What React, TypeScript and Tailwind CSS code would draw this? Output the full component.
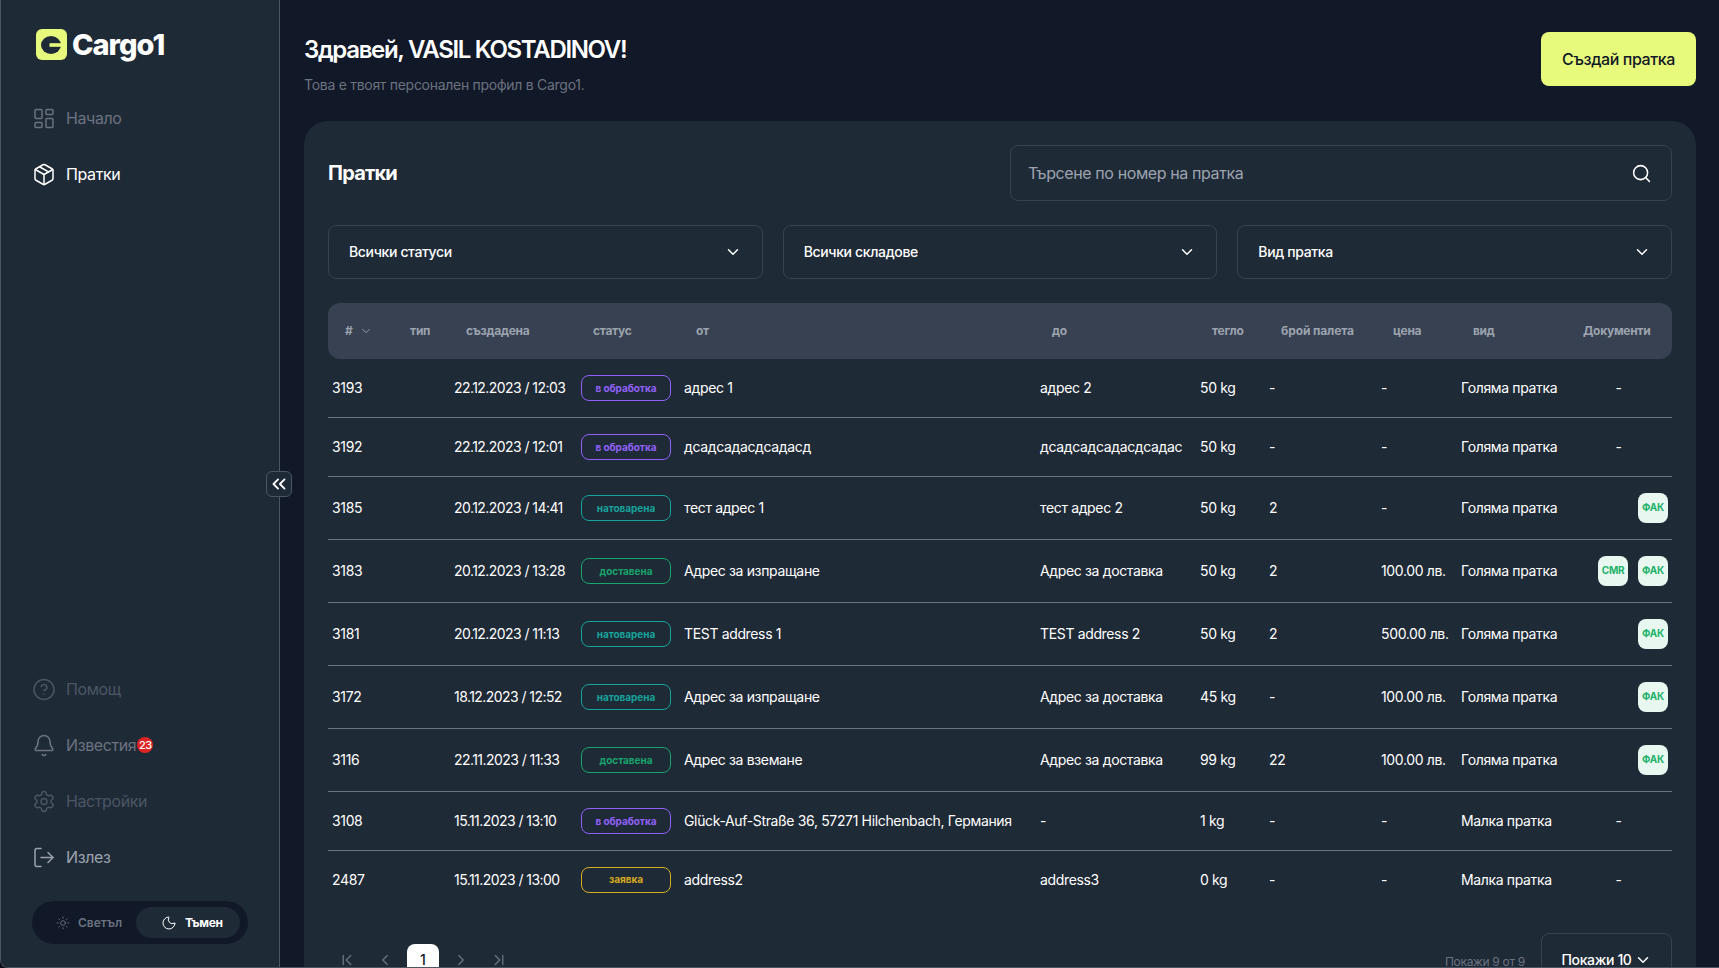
import { LayoutDashboard, Package, CircleHelp, Bell, Settings, LogOut, Sun, Moon, Search, ChevronDown, ChevronsLeft, ChevronLeft, ChevronRight, ChevronFirst, ChevronLast } from "lucide-react";

type Row = { id: string; date: string; status: "p" | "l" | "d" | "r"; from: string; to: string; w: string; pal: string; price: string; kind: string; docs: string[]; h: string };

const rows: Row[] = [
  { id: "3193", date: "22.12.2023 / 12:03", status: "p", from: "адрес 1", to: "адрес 2", w: "50 kg", pal: "-", price: "-", kind: "Голяма пратка", docs: [], h: "h-[59px]" },
  { id: "3192", date: "22.12.2023 / 12:01", status: "p", from: "дсадсадасдсадасд", to: "дсадсадсадасдсадас", w: "50 kg", pal: "-", price: "-", kind: "Голяма пратка", docs: [], h: "h-[59px]" },
  { id: "3185", date: "20.12.2023 / 14:41", status: "l", from: "тест адрес 1", to: "тест адрес 2", w: "50 kg", pal: "2", price: "-", kind: "Голяма пратка", docs: ["ФАК"], h: "h-[63px]" },
  { id: "3183", date: "20.12.2023 / 13:28", status: "d", from: "Адрес за изпращане", to: "Адрес за доставка", w: "50 kg", pal: "2", price: "100.00 лв.", kind: "Голяма пратка", docs: ["CMR", "ФАК"], h: "h-[63px]" },
  { id: "3181", date: "20.12.2023 / 11:13", status: "l", from: "TEST address 1", to: "TEST address 2", w: "50 kg", pal: "2", price: "500.00 лв.", kind: "Голяма пратка", docs: ["ФАК"], h: "h-[63px]" },
  { id: "3172", date: "18.12.2023 / 12:52", status: "l", from: "Адрес за изпращане", to: "Адрес за доставка", w: "45 kg", pal: "-", price: "100.00 лв.", kind: "Голяма пратка", docs: ["ФАК"], h: "h-[63px]" },
  { id: "3116", date: "22.11.2023 / 11:33", status: "d", from: "Адрес за вземане", to: "Адрес за доставка", w: "99 kg", pal: "22", price: "100.00 лв.", kind: "Голяма пратка", docs: ["ФАК"], h: "h-[63px]" },
  { id: "3108", date: "15.11.2023 / 13:10", status: "p", from: "Glück-Auf-Straße 36, 57271 Hilchenbach, Германия", to: "-", w: "1 kg", pal: "-", price: "-", kind: "Малка пратка", docs: [], h: "h-[59px]" },
  { id: "2487", date: "15.11.2023 / 13:00", status: "r", from: "address2", to: "address3", w: "0 kg", pal: "-", price: "-", kind: "Малка пратка", docs: [], h: "h-[59px]" },
];

function Badge({ s }: { s: Row["status"] }) {
  if (s === "p") return <span className="flex h-[26px] w-[90px] items-center justify-center rounded-lg border border-[#9061f9] text-[10px] font-bold tracking-[-0.005em] text-[#9061f9]">в обработка</span>;
  if (s === "l") return <span className="flex h-[26px] w-[90px] items-center justify-center rounded-lg border border-[#16a39a] text-[10px] font-bold tracking-[-0.005em] text-[#16a39a]">натоварена</span>;
  if (s === "d") return <span className="flex h-[26px] w-[90px] items-center justify-center rounded-lg border border-[#17a56b] text-[10px] font-bold tracking-[-0.005em] text-[#17a56b]">доставена</span>;
  return <span className="flex h-[26px] w-[90px] items-center justify-center rounded-lg border border-[#d8ab1f] text-[10px] font-bold tracking-[-0.005em] text-[#d8ab1f]">заявка</span>;
}

function Nav({ icon, label, cls, badge }: { icon: React.ReactNode; label: string; cls: string; badge?: string }) {
  return (
    <div className={`flex h-14 items-center gap-[10px] pl-[31px] text-base ${cls}`}>
      <span className="flex w-6 justify-center">{icon}</span>
      <span className="tracking-tight">{label}</span>
      {badge && <span className="-ml-[9px] flex size-4 items-center justify-center rounded-full bg-[#dc2626] text-[11px] font-medium tracking-tighter text-white">{badge}</span>}
    </div>
  );
}

function Select({ label }: { label: string }) {
  return (
    <div className="flex h-[54px] flex-1 items-center justify-between rounded-lg border border-[#374151] pl-5 pr-[20px]">
      <span className="text-sm font-medium tracking-tight text-white">{label}</span>
      <ChevronDown size={18} strokeWidth={2} className="text-white" />
    </div>
  );
}

const td = "border-b border-[#6b7280] pl-1 align-middle text-sm tracking-tight text-white whitespace-nowrap";
const tdLast = "pl-1 pb-[2px] align-middle text-sm tracking-tight text-white whitespace-nowrap";
const dateTd = "border-b border-[#6b7280] pl-1 align-middle text-sm tracking-[-0.04em] text-white whitespace-nowrap";
const dateTdLast = "pl-1 pb-[2px] align-middle text-sm tracking-[-0.04em] text-white whitespace-nowrap";
const th = "pl-4 text-left text-xs font-bold tracking-tight text-[#9ca3af] whitespace-nowrap";
const thWide = "pl-4 text-left text-xs font-bold tracking-[-0.01em] text-[#9ca3af] whitespace-nowrap";

export default function App() {
  return (
    <div className="h-[968px] bg-[#0b0f17]">
      <div className="relative flex h-[968px] overflow-hidden rounded-bl-lg border-b border-l border-[#4b5563] bg-[#111827] font-['Inter',sans-serif]">
        <aside className="relative flex w-[279px] shrink-0 flex-col border-r border-[#4b5563] bg-[#1f2a37] pb-[23px]">
          <div className="flex items-center gap-[5px] pl-[35px] pt-[29px]">
            <span className="flex size-[31px] items-center justify-center rounded-md bg-[#e8fa7c]">
              <svg width="21" height="18" viewBox="0 0 21 18">
                <ellipse cx="10" cy="9" rx="10" ry="9" fill="#1f2a37" />
                <rect x="8.5" y="7.2" width="12.5" height="3.6" fill="#e8fa7c" />
              </svg>
            </span>
            <span className="text-[29px] font-extrabold leading-none tracking-[-0.035em] text-white">Cargo1</span>
          </div>
          <div className="mt-[30px]">
            <Nav icon={<LayoutDashboard size={25} strokeWidth={1.5} />} label="Начало" cls="text-[#6b7280]" />
            <Nav icon={<Package size={25} strokeWidth={1.5} />} label="Пратки" cls="text-white" />
          </div>
          <div className="mt-auto">
            <Nav icon={<CircleHelp size={25} strokeWidth={1.5} />} label="Помощ" cls="text-[#4b5563]" />
            <Nav icon={<Bell size={25} strokeWidth={1.5} />} label="Известия" cls="text-[#6b7280]" badge="23" />
            <Nav icon={<Settings size={25} strokeWidth={1.5} />} label="Настройки" cls="text-[#4b5563]" />
            <Nav icon={<LogOut size={25} strokeWidth={1.5} />} label="Излез" cls="text-[#9ca3af]" />
            <div className="ml-[31px] mt-4 flex h-[43px] w-[216px] items-center rounded-full bg-[#111827] pl-[24px] pr-2 text-xs">
              <Sun size={14} strokeWidth={1.5} className="text-[#6b7280]" />
              <span className="ml-[8px] font-semibold text-[#6b7280]">Светъл</span>
              <div className="ml-auto flex h-[31px] w-[104px] items-center gap-[8px] rounded-full bg-[#1f2a37] pl-[25px]">
                <Moon size={16} strokeWidth={1.5} className="text-white" />
                <span className="font-bold tracking-tight text-white">Тъмен</span>
              </div>
            </div>
          </div>
          <button className="absolute right-[-13px] top-[471px] flex size-[26px] items-center justify-center rounded-md border border-[#4b5563] bg-[#1f2a37] text-white">
            <ChevronsLeft size={22} strokeWidth={2} />
          </button>
        </aside>

        <main className="min-w-0 flex-1 pl-6 pr-[23px]">
          <header className="flex items-start justify-between pt-8">
            <div>
              <h1 className="mt-1 text-2xl/7 font-semibold tracking-[-0.055em] text-white">Здравей, VASIL KOSTADINOV!</h1>
              <p className="mt-[11px] text-sm tracking-[-0.02em] text-[#6b7280]">Това е твоят персонален профил в Cargo1.</p>
            </div>
            <button className="h-[54px] w-[155px] rounded-lg bg-[#e8fa7c] text-base font-medium tracking-tight text-[#111827]">Създай пратка</button>
          </header>

          <section className="mt-[26px] rounded-t-3xl bg-[#1f2a37] px-6 pt-6">
            <div className="flex items-center justify-between">
              <h2 className="text-xl font-bold tracking-[-0.04em] text-white">Пратки</h2>
              <div className="flex h-[56px] w-[662px] items-center justify-between rounded-lg border border-[#374151] pl-[17px] pr-[19px]">
                <span className="text-base tracking-tight text-[#9ca3af]">Търсене по номер на пратка</span>
                <Search size={21} strokeWidth={1.75} className="text-white" />
              </div>
            </div>

            <div className="mt-6 flex gap-[20px]">
              <Select label="Всички статуси" />
              <Select label="Всички складове" />
              <Select label="Вид пратка" />
            </div>

            <table className="mt-6 w-[1344px] table-fixed border-separate border-spacing-0">
              <colgroup>
                <col className="w-[66px]" />
                <col className="w-[56px]" />
                <col className="w-[127px]" />
                <col className="w-[103px]" />
                <col className="w-[356px]" />
                <col className="w-[160px]" />
                <col className="w-[69px]" />
                <col className="w-[112px]" />
                <col className="w-[80px]" />
                <col className="w-[110px]" />
                <col className="w-[105px]" />
              </colgroup>
              <thead>
                <tr className="h-14 bg-[#374151]">
                  <th className={`${th} rounded-l-xl`}>
                    <span className="ml-[1px] flex items-center gap-[6px]"># <ChevronDown size={14} strokeWidth={1.5} /></span>
                  </th>
                  <th className={th}>тип</th>
                  <th className={th}>създадена</th>
                  <th className={th}>статус</th>
                  <th className={th}>от</th>
                  <th className={th}>до</th>
                  <th className={th}>тегло</th>
                  <th className={thWide}>брой палета</th>
                  <th className={th}>цена</th>
                  <th className={th}>вид</th>
                  <th className={`${th} rounded-r-xl`}>Документи</th>
                </tr>
              </thead>
              <tbody>
                {rows.map((r, i) => {
                  const last = i === rows.length - 1;
                  const c = last ? tdLast : td;
                  return (
                    <tr key={r.id} className={r.h}>
                      <td className={c}>{r.id}</td>
                      <td className={c}></td>
                      <td className={last ? dateTdLast : dateTd}>{r.date}</td>
                      <td className={c}><Badge s={r.status} /></td>
                      <td className={c}>{r.from}</td>
                      <td className={c}>{r.to}</td>
                      <td className={c}>{r.w}</td>
                      <td className={c}>{r.pal}</td>
                      <td className={c}>{r.price}</td>
                      <td className={c}>{r.kind}</td>
                      <td className={c}>
                        {r.docs.length === 0 ? (
                          <div className="pr-[6px] text-center">-</div>
                        ) : (
                          <div className="flex justify-end gap-[10px] pr-1">
                            {r.docs.map((d) => (
                              <span key={d} className="flex h-[30px] w-[30px] items-center justify-center rounded-lg bg-[#e8f8f0] pb-[2px] text-[10px] font-bold tracking-tight text-[#1db16a]">{d}</span>
                            ))}
                          </div>
                        )}
                      </td>
                    </tr>
                  );
                })}
              </tbody>
            </table>

            <div className="mt-[23px] flex items-start justify-between">
              <div className="flex items-center pl-[10px] pt-[11px] text-[#6b7280]">
                <ChevronFirst size={18} strokeWidth={1.75} />
                <ChevronLeft size={18} strokeWidth={1.75} className="ml-[20px]" />
                <span className="ml-[13px] flex h-[32px] w-[32px] items-center justify-center rounded-lg bg-white text-sm font-medium text-[#111827]">1</span>
                <ChevronRight size={18} strokeWidth={1.75} className="ml-[13px]" />
                <ChevronLast size={18} strokeWidth={1.75} className="ml-[20px]" />
              </div>
              <div className="flex items-start">
                <span className="pt-[21px] text-xs tracking-tight text-[#6b7280]">Покажи 9 от 9</span>
                <div className="ml-4 flex h-[54px] w-[131px] items-center justify-center gap-[2px] rounded-lg border border-[#374151] text-sm font-medium tracking-tight text-white">
                  Покажи 10 <ChevronDown size={18} strokeWidth={2} />
                </div>
              </div>
            </div>
          </section>
        </main>
      </div>
    </div>
  );
}
